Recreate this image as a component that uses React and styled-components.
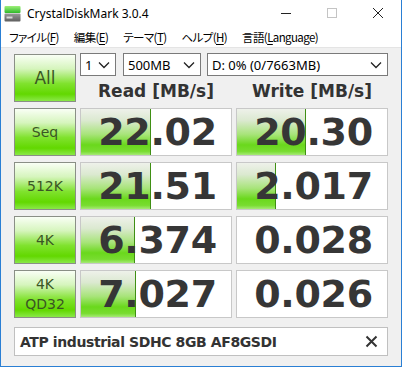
import { Fragment } from "react"
import styled, { createGlobalStyle } from "styled-components"

const GlobalStyle = createGlobalStyle`
  html, body {
    margin: 0;
    padding: 0;
    background: #ffffff;
  }
  * {
    box-sizing: border-box;
  }
`

const Window = styled.div`
  width: 402px;
  height: 367px;
  display: flex;
  flex-direction: column;
  background: #f0f0f0;
  border-left: 1px solid #2a7fd4;
  border-right: 1px solid #2a7fd4;
  border-bottom: 1px solid #2a7fd4;
  overflow: hidden;
`

const TitleBar = styled.div`
  height: 26px;
  display: flex;
  align-items: center;
  background: #ffffff;
  padding-left: 3px;
`

const Title = styled.span`
  font-family: "Noto Sans", "Liberation Sans", sans-serif;
  font-size: 12px;
  color: #000;
  margin-left: 6px;
`

const Controls = styled.div`
  margin-left: auto;
  display: flex;
  height: 100%;
`

const ControlButton = styled.div`
  width: 46px;
  height: 100%;
  display: flex;
  align-items: center;
  justify-content: center;
`

const MenuBar = styled.div`
  height: 22px;
  display: flex;
  align-items: center;
  gap: 15px;
  padding-left: 8px;
  background: #ffffff;
  border-bottom: 1px solid #e4e4e4;
`

const MenuItem = styled.span`
  font-family: "Noto Sans CJK JP", "Noto Sans", sans-serif;
  font-feature-settings: "palt" 1;
  font-size: 11.5px;
  letter-spacing: -0.6px;
  color: #000;
  u {
    text-decoration-thickness: 1px;
    text-underline-offset: 2px;
  }
`

const Content = styled.div`
  padding: 6px 0 0 13px;
`

const Grid = styled.div`
  display: grid;
  grid-template-columns: 62px 152px 152px;
  grid-template-rows: repeat(5, 48px);
  column-gap: 4px;
  row-gap: 6px;
`

const GreenButton = styled.div`
  display: flex;
  flex-direction: column;
  align-items: center;
  justify-content: center;
  border: 1px solid #8a8f86;
  background: linear-gradient(to bottom, #f9fff5 0%, #d6f5bd 30%, #80e22e 62%, #62d800 85%, #8ae848 100%);
  font-family: "DejaVu Sans", "Verdana", sans-serif;
  font-size: ${(p) => p.$size || 14}px;
  line-height: 20px;
  color: #3a5624;
`

const TopArea = styled.div`
  grid-column: 2 / 4;
  display: flex;
  flex-direction: column;
  margin-top: -1px;
`

const SelectRow = styled.div`
  display: flex;
  height: 23px;
`

const Select = styled.div`
  width: ${(p) => p.$w}px;
  margin-right: ${(p) => p.$gap || 0}px;
  height: 23px;
  display: flex;
  align-items: center;
  justify-content: space-between;
  padding: 0 5px 0 4px;
  background: #ffffff;
  border: 1px solid #7a7a7a;
  font-family: "Noto Sans", "Liberation Sans", sans-serif;
  font-size: 13px;
  color: #000;
`

const Headers = styled.div`
  display: grid;
  grid-template-columns: 152px 152px;
  column-gap: 4px;
  flex: 1;
  align-items: center;
  padding-top: 4px;
`

const Header = styled.div`
  text-align: center;
  font-family: "DejaVu Sans", "Verdana", sans-serif;
  font-weight: bold;
  font-size: 17px;
  color: #333333;
`

const Cell = styled.div`
  position: relative;
  background: #ffffff;
  border: 1px solid #c8c8c8;
  display: flex;
  align-items: center;
  justify-content: center;
  overflow: hidden;
`

const Bar = styled.div`
  position: absolute;
  left: 0;
  top: 0;
  bottom: 0;
  background: linear-gradient(to bottom, #eef1ea 0%, #dbe9d0 25%, #a8e47a 55%, #6ad81c 78%, #78dc30 92%, #a6ea76 100%);
  border-right: 1px solid #3f8f14;
`

const Value = styled.span`
  position: relative;
  margin-left: 3px;
  font-family: "DejaVu Sans", "Verdana", sans-serif;
  font-weight: bold;
  font-size: 38px;
  letter-spacing: -0.3px;
  color: #363636;
`

const Comment = styled.div`
  margin-top: 9px;
  width: 374px;
  height: 29px;
  display: flex;
  align-items: center;
  justify-content: space-between;
  padding: 0 9px 0 5px;
  background: #ffffff;
  border: 1px solid #c0c0c0;
  font-family: "DejaVu Sans", "Verdana", sans-serif;
  font-weight: bold;
  font-size: 14px;
  letter-spacing: -0.4px;
  color: #333333;
`

const Chevron = () => (
  <svg width="12" height="8" viewBox="0 0 12 8">
    <path d="M1 1.5 L6 6.5 L11 1.5" fill="none" stroke="#222" strokeWidth="1.3" />
  </svg>
)

const AppIcon = () => (
  <svg width="17" height="17" viewBox="0 0 17 17">
    <defs>
      <linearGradient id="g" x1="0" y1="0" x2="0" y2="1">
        <stop offset="0" stopColor="#9ef07a" />
        <stop offset="1" stopColor="#2fb82a" />
      </linearGradient>
      <linearGradient id="d" x1="0" y1="0" x2="0" y2="1">
        <stop offset="0" stopColor="#9a9a9a" />
        <stop offset="1" stopColor="#5e5e5e" />
      </linearGradient>
    </defs>
    <rect x="0.5" y="1" width="16" height="7" rx="1" fill="url(#g)" />
    <rect x="0.5" y="8.5" width="16" height="8" rx="1" fill="url(#d)" />
    <rect x="2.5" y="11.5" width="6" height="2" fill="#d8d8d8" />
  </svg>
)

const barWidth = (v) => Math.max(0, Math.min(1, (Math.log10(v) + 1) / 5)) * 100

const rows = [
  { id: "seq", label: ["Seq"], read: "22.02", write: "20.30" },
  { id: "512k", label: ["512K"], read: "21.51", write: "2.017" },
  { id: "4k", label: ["4K"], read: "6.374", write: "0.028" },
  { id: "qd32", label: ["4K", "QD32"], read: "7.027", write: "0.026" },
]

const Result = ({ value }) => {
  const w = barWidth(parseFloat(value))
  return (
    <Cell>
      {w > 0 && <Bar style={{ width: `${w}%` }} />}
      <Value>{value}</Value>
    </Cell>
  )
}

const App = () => {
  return (
    <>
      <GlobalStyle />
      <Window>
        <TitleBar>
          <AppIcon />
          <Title>CrystalDiskMark 3.0.4</Title>
          <Controls>
            <ControlButton>
              <svg width="12" height="12" viewBox="0 0 12 12">
                <path d="M1 6.5 H11" stroke="#222" strokeWidth="1" />
              </svg>
            </ControlButton>
            <ControlButton>
              <svg width="12" height="12" viewBox="0 0 12 12">
                <rect x="1.5" y="1.5" width="9" height="9" fill="none" stroke="#c4c4c4" strokeWidth="1" />
              </svg>
            </ControlButton>
            <ControlButton>
              <svg width="12" height="12" viewBox="0 0 12 12">
                <path d="M1 1 L11 11 M11 1 L1 11" stroke="#222" strokeWidth="1" />
              </svg>
            </ControlButton>
          </Controls>
        </TitleBar>
        <MenuBar>
          <MenuItem>ファイル(<u>F</u>)</MenuItem>
          <MenuItem>編集(<u>E</u>)</MenuItem>
          <MenuItem>テーマ(<u>T</u>)</MenuItem>
          <MenuItem>ヘルプ(<u>H</u>)</MenuItem>
          <MenuItem>言語(<u>L</u>anguage)</MenuItem>
        </MenuBar>
        <Content>
          <Grid>
            <GreenButton $size={17}>All</GreenButton>
            <TopArea>
              <SelectRow>
                <Select $w={36} $gap={7}>1<Chevron /></Select>
                <Select $w={78} $gap={6}>500MB<Chevron /></Select>
                <Select $w={181}>D: 0% (0/7663MB)<Chevron /></Select>
              </SelectRow>
              <Headers>
                <Header>Read [MB/s]</Header>
                <Header>Write [MB/s]</Header>
              </Headers>
            </TopArea>
            {rows.map((r) => (
              <Fragment key={r.id}>
                <GreenButton>
                  {r.label.map((l) => (
                    <span key={l}>{l}</span>
                  ))}
                </GreenButton>
                <Result value={r.read} />
                <Result value={r.write} />
              </Fragment>
            ))}
          </Grid>
          <Comment>
            <span>ATP industrial SDHC 8GB AF8GSDI</span>
            <svg width="13" height="13" viewBox="0 0 13 13">
              <path d="M1.5 1.5 L11.5 11.5 M11.5 1.5 L1.5 11.5" stroke="#333" strokeWidth="2" />
            </svg>
          </Comment>
        </Content>
      </Window>
    </>
  )
}

export default App
